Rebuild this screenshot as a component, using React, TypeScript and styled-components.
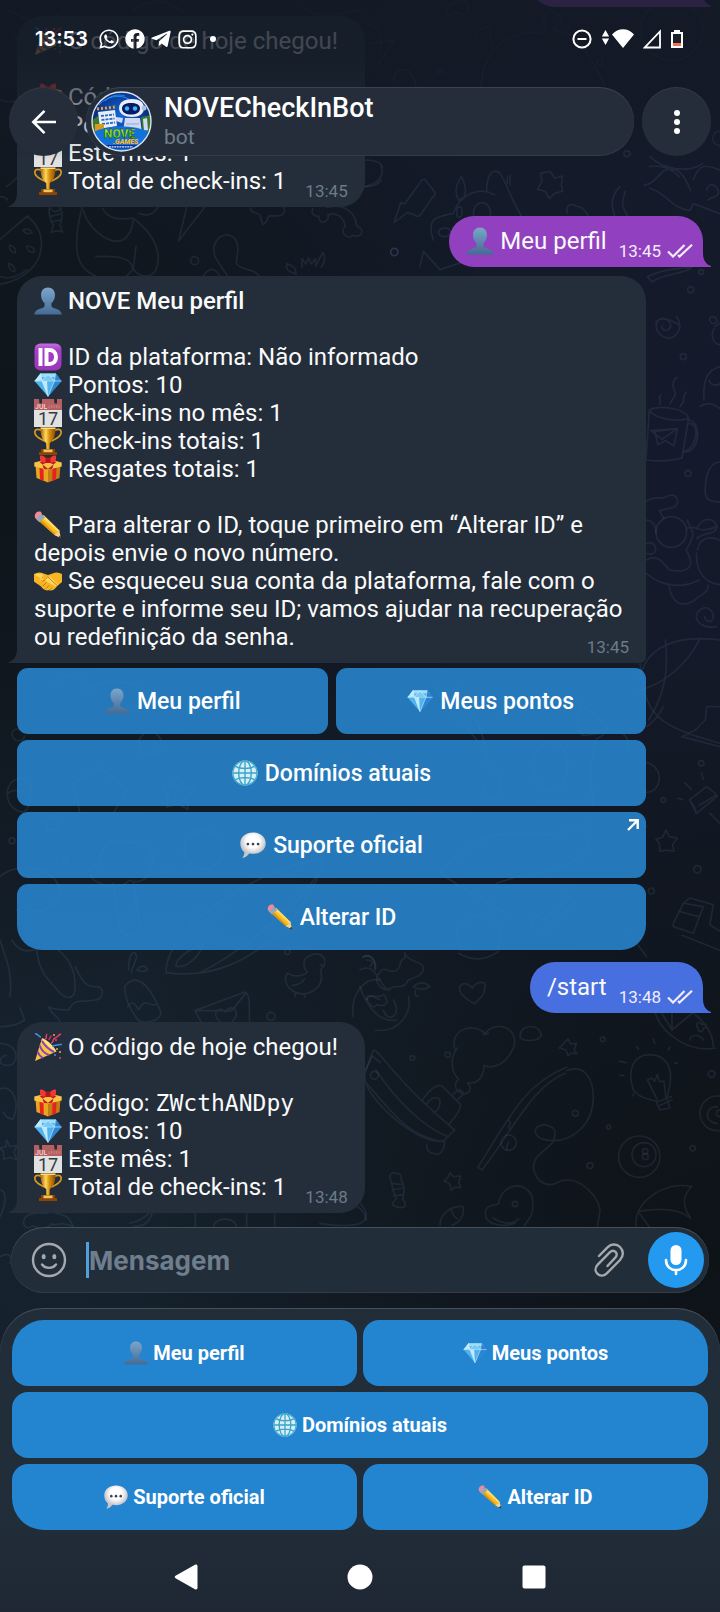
import React from 'react'
import type { FC, ReactNode } from 'react'
import styled, { createGlobalStyle } from 'styled-components'
import { FaWhatsapp, FaFacebook, FaTelegramPlane, FaInstagram } from 'react-icons/fa'

const GlobalStyle = createGlobalStyle`
  * {
    box-sizing: border-box;
  }
  body {
    margin: 0;
    background-color: #131a27;
    font-family: Roboto, 'Noto Sans', sans-serif;
    color: #ffffff;
  }
  button,
  input {
    margin: 0;
    padding: 0;
    border: 0;
    background: none;
    color: inherit;
    font-family: inherit;
  }
  svg {
    display: block;
    flex: none;
  }
`

const Screen = styled.div`
  position: relative;
  display: flex;
  flex-direction: column;
  height: 100vh;
  overflow: hidden;
  background:
    radial-gradient(circle at 100% 78%, #0e1318 0, rgba(14, 19, 24, 0) 45%),
    radial-gradient(circle at 0% 28%, #0e151a 0, rgba(14, 21, 26, 0) 40%),
    radial-gradient(circle at 100% 28%, #141a2b 0, rgba(20, 26, 43, 0) 50%),
    radial-gradient(circle at 15% 75%, #16242f 0, rgba(22, 36, 47, 0) 45%),
    #131a26;
`

const Wallpaper = styled.svg`
  position: absolute;
  inset: 0;
  width: 100%;
  height: 100%;
  fill: none;
  stroke: rgba(120, 155, 195, 0.12);
  stroke-linecap: round;
  stroke-linejoin: round;
  stroke-width: 5;
`

/* top bars */

const TopOverlay = styled.header`
  position: absolute;
  z-index: 2;
  top: 0;
  left: 0;
  right: 0;
  padding: 0 9px 4px;
  background: linear-gradient(
    rgba(19, 26, 38, 0.8),
    rgba(19, 26, 38, 0.8) 35%,
    rgba(19, 26, 38, 0.6) 60%,
    rgba(19, 26, 38, 0)
  );
`

const StatusBar = styled.div`
  display: flex;
  align-items: center;
  gap: 5px;
  height: 78px;
  padding: 0 26px;
  margin-bottom: 9px;
`

const Clock = styled.time`
  margin-right: 5px;
  font-family: Inter, Roboto, sans-serif;
  font-size: 20px;
  font-weight: 600;
  line-height: 24px;
`

const StatusIcons = styled.div`
  display: flex;
  align-items: center;
  gap: 9px;
  margin-left: auto;
`

const Dot = styled.span`
  width: 6px;
  height: 6px;
  margin-left: 7px;
  border-radius: 50%;
  background-color: #ffffff;
`

const TopRow = styled.div`
  display: flex;
  gap: 8px;
`

const RoundButton = styled.button`
  display: flex;
  align-items: center;
  justify-content: center;
  flex: none;
  width: 69px;
  height: 69px;
  border-radius: 50%;
  background-color: #262d3a;
  box-shadow: inset 0 1px 0 #323a46;
`

const TitlePill = styled.div`
  display: flex;
  align-items: center;
  flex: 1;
  gap: 12px;
  min-width: 0;
  height: 69px;
  padding-left: 5px;
  border-radius: 35px;
  background-color: #262d3a;
  box-shadow: inset 0 1px 0 #3a434e, inset 0 -1px 0 #323a46;
`

const ChatTitle = styled.h1`
  margin: 0;
  font-size: 27px;
  font-weight: 500;
  line-height: 30px;
`

const ChatSubtitle = styled.p`
  margin: 0;
  font-size: 21px;
  line-height: 28px;
  color: #6f7e8b;
`

/* messages */

const Chat = styled.main`
  position: relative;
  display: flex;
  flex: 1;
  flex-direction: column;
  justify-content: flex-end;
  gap: 9px;
  min-height: 0;
  padding: 0 17px 14px;
  overflow: hidden;
`

const Bubble = styled.article<{ $out?: string; $joined?: boolean }>`
  position: relative;
  flex: none;
  width: fit-content;
  max-width: 629px;
  align-self: ${({ $out }) => ($out ? 'flex-end' : 'flex-start')};
  padding: 11px ${({ $out }) => ($out ? 10 : 17)}px 6px 17px;
  border-radius: ${({ $out, $joined }) =>
    $out ? '25px 25px 0 25px' : $joined ? '25px 25px 6px 0' : '25px 25px 25px 0'};
  background-color: ${({ $out }) => $out || '#232e3a'};
  color: ${({ $out }) => $out || '#232e3a'};
`

const Tail = styled.svg<{ $right?: boolean }>`
  position: absolute;
  bottom: 0;
  ${({ $right }) => ($right ? 'right: -8px; transform: scaleX(-1);' : 'left: -8px;')}
`

const Line = styled.div<{ $bold?: boolean }>`
  min-height: 28px;
  font-size: 24px;
  line-height: 28px;
  font-weight: ${({ $bold }) => ($bold ? 500 : 400)};
  color: #fafafa;
`

/* the stamp hangs 6px below its line, the bubble's bottom padding allows for it */
const Stamp = styled.span<{ $out?: boolean }>`
  display: flex;
  align-items: center;
  gap: 6px;
  float: right;
  height: 20px;
  margin: 14px 0 0 ${({ $out }) => ($out ? 12 : 19)}px;
  font-size: 17px;
  line-height: 20px;
  color: ${({ $out }) => ($out ? '#f4ecfb' : '#6d7b88')};
`

const Code = styled.code`
  font-family: 'DejaVu Sans Mono', monospace;
  font-size: 23px;
  line-height: 24px;
`

const Group = styled.section`
  display: flex;
  flex-direction: column;
  flex: none;
  gap: 5px;
  width: 100%;
  max-width: 629px;
  margin-bottom: 3px;
`

const Keys = styled.div<{ $gap: number }>`
  display: grid;
  grid-template-columns: 1fr 1fr;
  gap: 6px ${({ $gap }) => $gap}px;
`

const Key = styled.button<{ $wide?: boolean }>`
  display: flex;
  align-items: center;
  justify-content: center;
  height: 66px;
  grid-column: ${({ $wide }) => ($wide ? '1 / -1' : 'auto')};
`

const InlineKey = styled(Key)`
  position: relative;
  gap: 7px;
  border-radius: 11px;
  background-color: rgba(40, 136, 209, 0.87);
  font-size: 23px;
  font-weight: 500;
  &:last-child {
    border-radius: 11px 11px 25px 25px;
  }
`

const LinkMark = styled.svg`
  position: absolute;
  top: 7px;
  right: 7px;
`

/* composer and reply keyboard */

const Composer = styled.form`
  position: relative;
  display: flex;
  align-items: center;
  flex: none;
  height: 66px;
  margin: 0 11px 15px;
  padding: 0 5px 0 20px;
  border-radius: 33px;
  background-color: #222d3a;
  box-shadow: inset 0 1px 0 #46505b, inset 0 -1px 0 #333d49;
`

const IconButton = styled.button`
  width: 36px;
  height: 36px;
  color: #a5a9ae;
`

const Caret = styled.span`
  width: 3px;
  height: 36px;
  margin-left: 19px;
  background-color: #529fdc;
`

const Field = styled.input`
  flex: 1;
  min-width: 0;
  height: 40px;
  outline: none;
  font-family: Inter, Roboto, sans-serif;
  font-size: 26px;
  font-weight: 700;
  &::placeholder {
    color: #6f7e8d;
    opacity: 1;
  }
`

const MicButton = styled.button`
  display: flex;
  align-items: center;
  justify-content: center;
  width: 56px;
  height: 56px;
  margin-left: 20px;
  border-radius: 50%;
  background-color: #2499f0;
`

const Panel = styled.footer`
  position: relative;
  flex: none;
  padding: 12px 12px 0;
  border-radius: 44px 44px 0 0;
  background: linear-gradient(#222d3a 70%, #1e2733);
  box-shadow: inset 0 1px 0 #46505b;
`

const ReplyKey = styled(Key)`
  gap: 5px;
  border-radius: 16px;
  background-color: #2384d0;
  font-size: 20px;
  font-weight: 700;
  &:nth-child(1) {
    border-top-left-radius: 32px;
  }
  &:nth-child(2) {
    border-top-right-radius: 32px;
  }
  &:nth-child(4) {
    border-bottom-left-radius: 32px;
  }
  &:nth-child(5) {
    border-bottom-right-radius: 32px;
  }
`

const NavBar = styled.nav`
  display: flex;
  align-items: center;
  justify-content: center;
  gap: 138px;
  height: 70px;
  margin-top: 12px;
`

const NavButton = styled.button`
  display: flex;
  align-items: center;
  justify-content: center;
  width: 36px;
  height: 36px;
`

/* emoji drawings, all on a 28 x 28 grid */

const EmojiSvg = styled.svg<{ $inline?: boolean }>`
  display: ${({ $inline }) => ($inline ? 'inline-block' : 'block')};
  vertical-align: top;
  margin-right: ${({ $inline }) => ($inline ? 6 : 0)}px;
`

const drawings: Record<string, ReactNode> = {
  person: (
    <>
      <defs>
        <linearGradient id="person" x1="0" y1="0" x2="0" y2="1">
          <stop offset="0" stopColor="#7ba6cb" />
          <stop offset="1" stopColor="#456b94" />
        </linearGradient>
      </defs>
      <path
        fill="url(#person)"
        d="M14 .5c4.300 0 7 3 7 7.500 0 3.600-1.500 6.500-3.600 8.200v2.600c0 1.200 1 1.700 3.100 2.400 4.200 1.300 6.500 2.400 7.300 6.300H.2c.8-3.900 3.100-5 7.300-6.300 2.100-.7 3.100-1.200 3.100-2.400v-2.600C8.500 14.500 7 11.600 7 8 7 3.500 9.700.5 14 .5z"
      />
    </>
  ),
  id: (
    <>
      <defs>
        <linearGradient id="idbg" x1="0" y1="0" x2="0" y2="1">
          <stop offset="0" stopColor="#c46fe0" />
          <stop offset="0.25" stopColor="#a63fc8" />
          <stop offset="1" stopColor="#9a35b8" />
        </linearGradient>
      </defs>
      <rect x="0.500" y="0.500" width="27" height="27" rx="6" fill="url(#idbg)" />
      <path d="M6.500 5v18M12.500 7v14h2.500c4.500 0 7-2.700 7-7s-2.500-7-7-7z" fill="none" stroke="#fff" strokeWidth="4" />
    </>
  ),
  gem: (
    <>
      <path fill="#4fb3ee" d="M6.500 2.500h15L27.500 10 14 25.500.5 10z" />
      <path fill="#9bdcfb" d="M6.500 2.500h15l3 3.500H3.700z" />
      <path fill="#7cc8f5" d="M7 9.500 14 4l7 5.500z" />
      <path fill="#bdeafd" d="M.5 10 6.500 2.500 8 9.500zM14 25.500 8 10h5z" />
      <path fill="#2b85d4" d="M14 25.500 20.500 10h7zM21.500 2.500l6 7.500-7-.5z" />
      <path d="M.5 10h27M8 10l6 15.500L20.500 10M6.500 2.500 8 10l6-7 6.500 7 1-7.500" fill="none" stroke="#d5f2fe" strokeWidth="0.600" />
    </>
  ),
  calendar: (
    <>
      <path fill="#e1e1e1" d="M0 10h28v18H0z" />
      <path fill="#b45f61" d="M0 0h28v11H0z" />
      <path fill="#252a33" d="M5 0h3v4.500H5.500zM20 0h3v4.500h-2.500z" />
      <text x="1" y="9.500" fontSize="7" fontWeight="500" fill="#f0d5d4">JUL</text>
      <path d="M15 6.500v3M17.500 6v3M20 6v3M22.500 6v3M25 6v3" stroke="#c9797b" strokeWidth="1.300" />
      <text x="14" y="26" fontSize="18" textAnchor="middle" fill="#36393e">17</text>
    </>
  ),
  trophy: (
    <>
      <defs>
        <linearGradient id="gold">
          <stop offset="0" stopColor="#a85f06" />
          <stop offset="0.350" stopColor="#ffd95a" />
          <stop offset="0.600" stopColor="#d78d0c" />
          <stop offset="1" stopColor="#8f4c04" />
        </linearGradient>
      </defs>
      <path d="M7.500 3.500C2.500 1 0 3 1.200 7c1.300 4 5.800 4.600 8.800 7M20.500 3.500c5-2.500 7.500-.5 6.300 3.500-1.300 4-5.800 4.600-8.800 7" fill="none" stroke="#d99a1d" strokeWidth="1.700" />
      <path fill="url(#gold)" d="M6.500.8h15c0 8-2 13-5.700 15.200l-.3 6.500h-3l-.3-6.500C8.500 13.800 6.500 8.800 6.500.8z" />
      <path fill="#f9dc7c" d="M6.500.5h15v1.500h-15z" />
      <path fill="#8a4408" d="M7 22h14v3h2v3H5v-3h2z" />
      <path fill="#f3c455" d="M9.500 22.500h9v2.700h-9z" />
    </>
  ),
  gift: (
    <>
      <path fill="#e9a520" d="M1.500 10 14 13.500v14L2.500 23z" />
      <path fill="#c47c14" d="M26.500 10 14 13.500v14L25.500 23z" />
      <path fill="#f5c445" d="M.3 7.500 14 4l13.700 3.500v4L14 15 .3 11.500z" />
      <path fill="#e2261e" d="m5.500 12.800 4 1.200.3 12-3.800-1.500zM22.500 12.800l-4 1.200-.3 12 3.800-1.500z" />
      <path fill="#c71b1b" d="m5.500 7 5-1.500 9 4-1.200 4.300-3.500.8zM22.500 7l-5-1.500-9 4 1.200 4.300 3.500.8z" />
      <path fill="#ee3a37" d="M13 4.500C10-.5 5-.5 6 2.500c-.5 4 1.500 6 7 4.500zM15 4.500c3-5 8-5 7-2 .5 4-1.500 6-7 4.500z" />
      <rect x="11.500" y="2.500" width="5" height="5.500" rx="1.500" fill="#b81518" />
    </>
  ),
  pencil: (
    <>
      <path fill="#fbbc1e" d="M8.500 4.500 25 20.500l1.500 6-6-2.500L3.500 8.800z" />
      <path fill="#e2930d" d="m3.500 8.800 2-1.500L22 23.500l-1.500.5z" />
      <path fill="#ffdc62" d="m8.500 4.500 1.500-.3L26 20l-1 .5-1.500 0L7.500 6z" />
      <path fill="#eed2a0" d="m20.500 24 4.800-4 1.700 7.200z" />
      <path fill="#3a3734" d="m27.200 27.500-3-1.200 2.200-2z" />
      <path fill="#95a8bb" d="m7 2.500 4.200 3.700-6 5L1.500 7.500z" />
      <path fill="#ef8a96" d="M1 6.500C-.2 3 3.300-.5 6.800.8L8 2.500 2.300 8z" />
    </>
  ),
  hands: (
    <>
      <path fill="#f7b523" d="M0 7c3-1.500 6-2 9.500-.5L14 8l4.500-1.500C22 5 25 5.500 28 7v8c-2 1.500-4 3-6 5.500-2 2.500-5 4-7 2.500-3 1.500-6-1-8-3.500-2-2-5-3-7-5z" />
      <path fill="#ffd75c" d="M1 7.800c3-1.300 5.500-1.300 8.500 0L6 12c-1 2 1 3 3 2l4-4 3-.5 8 8c-1 2-2.500 2-4 1z" />
      <path d="m9 19 3-3M12 21.500l3-3M15.500 23l2.500-2.500M14 10l9 8.500M7 13.500c2 1.500 4 0 6-3" fill="none" stroke="#bb6f0b" strokeWidth="0.900" strokeLinecap="round" />
    </>
  ),
  globe: (
    <>
      <circle cx="14" cy="14" r="13.500" fill="#d9eef8" />
      <path d="M14 .5v27M.5 14h27M3 6.500c6 3.500 16 3.500 22 0M3 21.500c6-3.500 16-3.500 22 0" fill="none" stroke="#39a5c8" strokeWidth="1.500" />
      <ellipse cx="14" cy="14" rx="6.800" ry="13.200" fill="none" stroke="#39a5c8" strokeWidth="1.500" />
      <circle cx="14" cy="14" r="13" fill="none" stroke="#49aecd" strokeWidth="1.400" />
    </>
  ),
  chat: (
    <>
      <defs>
        <radialGradient id="talk" cx="0.5" cy="0.350">
          <stop offset="0.500" stopColor="#ffffff" />
          <stop offset="1" stopColor="#c4c6ca" />
        </radialGradient>
      </defs>
      <path fill="url(#talk)" d="M14 .5c7.500 0 13.700 4.500 13.700 11.500S21.500 23.500 14 23.500c-1.300 0-2.700-.1-4-.4-1.800 2.400-4.500 4.400-7.700 4.700 1.800-1.800 2.500-4 2.200-6.300C1.800 19.400.3 16 .3 12 .3 5 6.500.5 14 .5z" />
      <g fill="#404247">
        <circle cx="8.500" cy="13" r="1.500" />
        <circle cx="14" cy="13" r="1.500" />
        <circle cx="19.500" cy="13" r="1.500" />
      </g>
    </>
  ),
  party: (
    <>
      <path fill="#f7c63a" d="m8 5 14.500 13.500L1 28z" />
      <path fill="#ffe37f" d="M8 5c4 1 12 8 14.500 13.500-5-1.500-12-8-14.500-13.500z" />
      <path d="M5.500 12c1.500 4.500 5 8.500 9.500 10M3.500 18.500c1 3 3 5 5.500 6.500M8 8c3 5 6 8 12 11" fill="none" stroke="#8b3fc4" strokeWidth="2" />
      <path d="M11 6c3-1 0-3 2-5M17 10c3 0 1-4 4-5s3-3 6-4" fill="none" stroke="#ee3a6e" strokeWidth="1.500" />
      <path d="M18 13c3 0 6-2 10-1.500M1 1c3-1 3 3 6 3" fill="none" stroke="#3f8cee" strokeWidth="1.500" />
      <path d="M15 7c0-2 2-2 2-4.500" fill="none" stroke="#d92f67" strokeWidth="1.500" />
      <g fill="#f2a93b">
        <circle cx="23" cy="16" r="1" />
        <circle cx="20" cy="2" r="1" />
        <circle cx="26" cy="19" r="1" />
      </g>
      <g fill="#ee3a6e">
        <circle cx="26" cy="25" r="1" />
        <circle cx="22" cy="7" r="1" />
      </g>
      <circle cx="21" cy="22" r="1" fill="#3f8cee" />
    </>
  ),
}

type EmojiProps = {
  name: string
  size?: number
  inline?: boolean
}

const Emoji: FC<EmojiProps> = ({ name, size = 28, inline }) => (
  <EmojiSvg $inline={inline} width={size} height={size} viewBox="0 0 28 28" aria-hidden="true">
    {drawings[name]}
  </EmojiSvg>
)

const E: FC<{ n: string }> = ({ n }) => <Emoji name={n} inline />

const BubbleTail: FC<{ right?: boolean }> = ({ right }) => (
  <Tail $right={right} width="9" height="14" viewBox="0 0 9 14" fill="currentColor" aria-hidden="true">
    <path d="M8 0h1v14H0v-1c5-1.500 8-6 8-13z" />
  </Tail>
)

type OutgoingProps = {
  color: string
  time: string
  children: ReactNode
}

const Outgoing: FC<OutgoingProps> = ({ color, time, children }) => (
  <Bubble $out={color}>
    <Line>
      {children}
      <Stamp $out>
        {time}
        <svg width="26" height="14" viewBox="0 0 26 14" fill="none" stroke="currentColor" strokeWidth="2.200" aria-hidden="true">
          <path d="m1 7.500 5 5L17.500 1M11 11l1.500 1.500L25 .8" />
        </svg>
      </Stamp>
    </Line>
    <BubbleTail right />
  </Bubble>
)

type CheckInProps = {
  code: string
  time: string
}

const CheckInMessage: FC<CheckInProps> = ({ code, time }) => (
  <Bubble>
    <Line><E n="party" />O código de hoje chegou!</Line>
    <Line />
    <Line><E n="gift" />Código: <Code>{code}</Code></Line>
    <Line><E n="gem" />Pontos: 10</Line>
    <Line><E n="calendar" />Este mês: 1</Line>
    <Line>
      <E n="trophy" />Total de check-ins: 1
      <Stamp>{time}</Stamp>
    </Line>
    <BubbleTail />
  </Bubble>
)

const Avatar = () => (
  <svg width="61" height="61" viewBox="0 0 61 61" role="img" aria-label="NOVE Games">
    <defs>
      <radialGradient id="sky" cx="0.5" cy="0.4">
        <stop offset="0" stopColor="#1467d8" />
        <stop offset="1" stopColor="#06267c" />
      </radialGradient>
      <linearGradient id="lime" x1="0" y1="0" x2="0" y2="1">
        <stop offset="0" stopColor="#d4f52a" />
        <stop offset="1" stopColor="#3fc414" />
      </linearGradient>
      <clipPath id="disc">
        <circle cx="30.500" cy="30.500" r="29" />
      </clipPath>
    </defs>
    <g clipPath="url(#disc)">
      <path fill="url(#sky)" d="M0 0h61v61H0z" />
      <path d="M8 14c8-9 20-11 30-6M14 10c6-6 14-7 20-5" fill="none" stroke="#2f9df5" strokeWidth="0.800" />
      <path fill="#3c7a2a" d="M0 30l7-5 3 14-8 3zM50 26l10-2v16l-8 2z" />
      <path fill="#e8eef8" d="m7 21 17-2 2 16-17 3z" />
      <path d="m6 18 18-2" stroke="#e0a62e" strokeWidth="3" strokeDasharray="2 2" />
      <path d="m10 25 13-1.500M10.500 29l13-1.500M11 33l13-1.500" stroke="#2b6ac2" strokeWidth="1.800" strokeDasharray="3 1" />
      <path fill="#d69b18" d="M4 33h9v8H4z" />
      <path fill="#cfdaf2" d="M34 27h15l2 14H32zM52 28l4-1 1 12-4 1zM25 26l7 1-1 5-6-2z" />
      <path fill="#e9eefc" d="M28 17c0-6 6-9 13-9s12 3 12 9-5 9-12 9-13-3-13-9z" />
      <path fill="#0a1a62" d="M31 17.500c0-4 4-5.500 9-5.500s9 1.500 9 5.500-4 6-9 6-9-2-9-6z" />
      <circle cx="36" cy="17.500" r="2.200" fill="#38b9ff" />
      <circle cx="44" cy="17.500" r="2.200" fill="#38b9ff" />
      <circle cx="53" cy="17" r="2.500" fill="#aebfe6" />
      <path d="M35 33h13" stroke="#8ea6d4" strokeWidth="1" />
      <path fill="#1172dc" d="M0 42c18-9 42-9 61 0v19H0z" />
      <text x="13" y="47" fontSize="12" fontWeight="900" fill="url(#lime)" stroke="#0a3d14" strokeWidth="0.400">NOVE</text>
      <text x="22" y="53" fontSize="7" fontWeight="900" fontStyle="italic" fill="#ffb81c">.GAMES</text>
      <path fill="#062f8f" d="M13 54h34v3.500H13z" />
      <path d="M18 55.800h24" stroke="#dfe9ff" strokeWidth="1.300" strokeDasharray="2 0.600" />
    </g>
    <circle cx="30.500" cy="30.500" r="29.500" fill="none" stroke="#dbe5f1" strokeWidth="1.400" />
  </svg>
)

const Doodles = () => (
  <Wallpaper viewBox="0 0 720 1612" preserveAspectRatio="xMidYMid slice" aria-hidden="true">
    <g transform="translate(0 180) scale(.3333)">
      <path d="M0 178 82 108c60 50 50 120 10 160-30 30-60 40-92 45M0 290c30 10 60-5 80-20M68 150q20-8 28 8-16 8-28-8zM28 195q22 5 18 24-18-2-18-24zM80 198q22 0 24 18-22 4-24-18zM26 250q20 5 18 24-18 0-18-24zM2 50q14 0 20 10" />
      <path d="M148 82q20 25 34 0 8 30-2 52l8 22q-18-8-34 2l6-24q-16-26-12-52zM150 110l30-8M152 126l30-6" />
      <path d="M246 82c-30 120-20 180 40 206M250 90c10 60 130 160 150 32M308 86c20 40 70 30 90 28 70 50 90 110 68 160-30 30-60 5-66-10l8-66M288 230c60-3 110 0 110 40l-20 20M415 100q40 15 58-18M560 82l-24 100 78-100M752 84c-6 14 30 16 28 22l8 26c10 4 16-24 22-25 40 4 50-6 40-25M938 86c-8 20 14 24 18 22 0 30 34 20 28-4 40-8 50 20 52 34-20 20 10 44 22 28 30 12 38-22 12-28-2-40-40-70-88-56" />
      <path d="M684 290c-40-60-44-60-42-90 10-40 56-50 70-10 8 50-20 60 16 74 30 8 40 12 50 24M610 288q26-40 50 0M862 250c-10 20 12 28 26 32 0-30-20-24-26-32zM906 262v-26l12 16 8-18 8 18 12-16 2 22 20-40c10 8 6 30-4 44M1094 20q36 0 50-20" />
      <circle cx="584" cy="242" r="12" /><circle cx="1183" cy="216" r="11" />
    </g>
    <g transform="scale(.3333)">
      <path d="M40 100c30 30 0 60 30 90M0 300c60 20 80-20 100-60M20 560c80-60 80-120 20-160M20 30c60 20 90 60 160 10M400 30c60-40 100-30 160 10M900 20c60 40 120 20 180 10" />
    </g>
    <g transform="translate(360) scale(.3333)">
      <path d="M262 40c-10-20 10-30 20-26 10-30 50-10 40 6 10 20-20 30-30 16-16 14-30 12-30 4zM20 70c40 10 50 40 40 90M30 130l74-8-50 70M100 240c0-40 60-50 68 20M364 260c0-90 70-180 190-160M556 100c-10-50 0-90 30-60 20 6 20 10 20 26-16 4-20 10-24 26 70 0 110 80 150 160M342 130c10-30 20-60 50-46-4 20-4 40 10 66" />
      <path d="M186 540q6-4 12 2l26 34q4 10-8 18l-34 50q-10 10-20 0l-20-6-40 30 20-60 12 4zM570 514l14 20 24-6-4 26 4 20-24 6-16 16-12-22-24-6 14-24-4-24zM304 530c-20 30-20 50-8 70l16-8c10-20 0-50-8-62zM380 572c0-50 20-70 40-52 20 30 30 70 64 128M280 640c20-60 80-80 124-56M220 720c-20-60 0-70 60-80M180 800l10-46 50 55 60-20M236 700c-4-20 30-20 36-6 0 20-30 20-36 6z" />
      <ellipse cx="366" cy="640" rx="26" ry="32" /><ellipse cx="298" cy="636" rx="8" ry="16" />
      <path d="M622 640c-8-30 20-30 26-20 20-6 30 20 36 26M780 560c-30 30-26 60-16 88M796 574c-10 30-14 40 6 72M870 470c40 40 120 50 158 20M868 500c50-10 80 20 90 30M852 556c30-6 40-26 60-44 40-16 60 10 80 60M870 565c60 20 60 60 120 66l10-20 80 30M1000 540c20-60 50-40 80-30M1040 570c10-30 30-10 34 0 10 20-20 20-30 30M450 526v28M442 530v20" />
      <circle cx="1080" cy="415" r="22" /><circle cx="801" cy="461" r="9" /><circle cx="103" cy="756" r="11" /><circle cx="240" cy="210" r="8" /><circle cx="720" cy="186" r="9" />
      <ellipse cx="935" cy="90" rx="94" ry="90" /><path d="M60 490c20 40-10 60-44 70M18 480q40 0 50 20" />
    </g>
    <g transform="translate(620 260) scale(.3333)">
      <path d="M82 50c60-30 100-20 130-30M82 50l14 16c40-30 90-20 120-44M108 190c10-30 70 0 72 10-14 60-80 30-70-10 10-30 44-10 42 10-10 20-30 10-26-2M170 170q12 16 8 30M272 172c14-8 26 14 14 18-14 4-20-10-14-18zM284 200c20-10 20-20 34-16M282 206c-10 20-4 44 16 48M252 420c-4-60 10-90 48-100M240 440c20-16 40-10 60 6M268 362c4 16 24 16 32 8" />
      <path d="M88 450 78 600q60 8 108-6l20-120c-10-30-90-40-118-24zM90 454c20 24 90 34 114 20M206 490c40 0 20 80-14 84M208 480c40 10 30 100-16 96M92 512l80-6-10 52-26-16-22 12-10-40 68-8-46 32zM118 434c10-20-8-16 4-30M150 432c20-40 20-20 10-50-4-20 4-26 12-30M180 440c20-20 4-30 18-44" />
      <path d="M300 606c-30 0-44 40-44 80-4 30 10 40 44 40M78 724c30-20 50-2 64-16 30-10 40 20 20 34l-44 10 14 24M78 780c20 2 30 12 30 40M202 804c40-10 20 20 90-4M230 806c20-40 50-30 60-10 4 30-40 20-60 40M232 870c10-50 60-40 80-20M230 880c-4 60 30 90 70 94M80 850c20-8 30 10 26 24-6 10-20 10-30 6M78 900c40-20 50 10 70 30 60 10 80-10 50-60 40-60 10-60 4-90M78 940c60 50 120 40 160 20M146 970c10 80 60 70 90 40 20-10 30-20 28-34" />
      <circle cx="154" cy="816" r="46" /><path d="M290 1100c-60 10-80-40-40-56 20-4 40 20 24 40-10 4-20-4-20-14M40 1296c90-20 160-80 200-160M136 1140c10 90 0 160-50 240M60 1260c10-80 80-140 240-120" />
      <circle cx="212" cy="89" r="9" /><circle cx="190" cy="290" r="9" /><circle cx="204" cy="640" r="9" /><circle cx="243" cy="36" r="7" />
    </g>
    <g transform="translate(340 480) scale(.3333)">
      <path d="M900 550c20 140 20 180 240 240M1140 680l-40 0-4 40-30 30-40 20 114 30M920 740q30-20 50-60M916 846c70 20 40 100 0 90M1048 960l52-40q40 30 30 30l-60 50zM1048 960q20 20 20 40M1078 976l50-30M1110 1000l40 40M1034 908l20 20M1084 878l6 20M1014 955l14 4M978 1050l10 20 24 4-14 20 4 20-22-4-20 4-2-24-10-12 20-6zM1000 1330l30-60 60 10-30 80-60-20zM1030 1270l20-16 70 20-10 60 30 20M1016 1294l60 16M1026 1366l114 45" />
      <path d="M280 600c10 60 80 120 100 140l60 80c-20 40 60 60 40 120-20 30-60 10-50-20M350 620c20 60 60 70 90 190M720 670c-10 60-10 100 20 96 50-10 70-10 30 10-20 60-20 100-10 200M720 670c30 20 60 50 90 80M760 760c60-30 120 0 100 50M300 1180c160-180 260-100 360-120l90-30c10 100-60 140-220 160l-60 20M300 1180c60 40 160 100 200 120M580 1340c-20-40 20-40 30-20l60-50c-10-30 10-30 20-14 20 0 20 30 0 30l-60 50c4 30-20 30-26 10M360 1410c-20-60-10-80 20-80 10-30 60-30 80 0 40 10 20 60 10 80zM860 1350l60 80M890 1000l30 40" />
      <ellipse cx="632" cy="858" rx="52" ry="74" /><circle cx="1084" cy="850" r="8" /><circle cx="970" cy="960" r="7" /><circle cx="934" cy="1233" r="9" /><circle cx="1072" cy="1168" r="11" />
    </g>
    <g transform="translate(0 650) scale(.3333)">
      <path d="M60 240c-20-10-30 10-20 24s30 10 34-6M220 400l80-50 80 70-40 70-100 0zM534 380l16 30 36 6-26 26 4 36-30-16-34 10 6-36-20-22 34-6zM22 430c0-60 90-60 70 0 0 30-10 60-30 56-30-10-40-30-40-56zM24 430c20-20 50 0 70-4M156 494l8 16 18 4-10 16 6 12-22-4-16 4 2-18-12-10 18-6zM0 680c40-40 160-40 180 40M50 780c60 20 130-10 130-60M300 700c-50-20-20-60 0-60-10-60 60-80 90-60 40-20 90 40 60 70 0 50-50 50-60 40-30 30-70 20-90 10zM340 700l20 140c20 30 60 10 60-10l-20-130" />
      <path d="M498 968c0-150 300-320 466-340 20 20-60 150-120 220-100 80-200 140-346 120zM528 948c0-30 60-60 80-60-10 30-50 70-80 60zM600 968c120-60 300-200 370-320M110 900c10 80 40 90 70 130 40 30 50 0 44-40-6-60-40-80-60-100M226 950c30 70 50 60 70 60 20 10 10 40-10 40-40 10-60-10-80 30-20 0-40 0-60-10 10 30 40 30 34 60M0 870c10 40 40 90 30 170M0 1130c40 0 60-10 74-20l-14-36M35 870q30 50 80 24M374 1010c30-40 70-20 110 80-10 30-60 30-70 20-30-40-40-70-40-100zM382 1070c20-20 20-10 34 10 20-40 30-10 50-16M585 1082l150-56c20 10 10 60 14 90M585 1082l110 0 44-54M585 1082l18 34M660 1116c-30-30 0-50 16-30 20-30 50 0 20 30M386 960c0-60 20-60 24-40-4 20-14 30-16 50M410 960c20-20 30-10 32 0-10 6-20 6-32 0z" />
      <path d="M862 970c-20 30 20 70 60 60 30-10 50-30 40-70 30-30 0-60-30-44-30 10-20 40-10 50-20 20-50 10-60 4zM878 1006c20 0 30-10 36-20M960 945l12 2-8 10M886 1030v10M914 1032v10M1060 1100c-10-60 30-120 80-110M1090 920c30-10 40 20 36 40M1110 950c10-10 10-20-10-20M1100 1050c10-20 20-10 40 0M150 110c60-60 120-20 110 10 50-40 160-30 190 20M270 560" />
      <circle cx="36" cy="572" r="9" /><circle cx="813" cy="1099" r="12" /><circle cx="450" cy="280" r="34" /><circle cx="198" cy="627" r="8" /><circle cx="494" cy="660" r="10" /><circle cx="862" cy="905" r="8" /><circle cx="610" cy="600" r="58" />
    </g>
    <g transform="translate(360 950) scale(.3333)">
      <path d="M296 10q60 36 120-6M0 60c50-30 60 60 90 60-40 0-50-40-30-52 10-30 40 20 60-20 0-30 20-10 14-40M134 10c10 30 60 20 56 50-10 30-50 20-50 40-20 20-40 0-54 20M146 140c10 60-40 110-100 100M0 110c20 60 60 110 110 100M20 140c20-10 30 10 50-6 20 20 10 40-20 30-10 20-30-10-30-24zM70 180c10 40 60 20 30-30M8 22c20-16 40 10 36 34M160 110c20-20 40-10 50 0-20 10-30 10-50 0zM166 122c-4 20 10 20 10 14M344 161c-60-30-50-60-30-60 10 0 20 10 24 14 6-20 30-20 36-14 4 30-10 40-30 60z" />
      <path d="M286 300c-20-50 40-90 90-50 30-40 100-20 86 40-20 50-60 70-90 56 0 20-10 60-50 52 20 20 0 40-20 30-20-10-20-30-6-40-20-20-30-60-4-94M386 250l-16 4M480 260c0-40 60-40 64-4-6 20-60 20-64 4zM40 300c20 0 60 90 244 240l-30 30c-60 30-240-120-240-190 4-30 16-50 26-80zM20 400c100 120 140 160 230 176M48 360c60 90 140 170 216 200M186 452c20-30 40-50 60-44l56 56c0 20-20 40-36 60M200 462c20-30 40-20 40-6 0 20-10 30-20 30M278 434l20-16 14 12-20 20M200 584c0 30 20 24 34 30 16-10 20-24 20-40" />
      <path d="M354 652C460 480 500 400 620 352M366 660c100-130 150-250 250-290M354 652l12 8M620 362c50-20 80 20 80 80 0 80-60 130-120 130-60 0-70-40-30-48 40 6 40 20 30 50-20 30-60 40-60 80 10 50 50 60 80 40 60-20 120 50 120 90l-8 46M450 540c-10-20 10-10-4-30M440 600c0-20 4-16 6-24M92 690c-10-20 10-24 16-20 20 0 16 16 14 18 16 20 10 40 6 60 20 20 0 30-20 22-20-4-4-20 2-26-16-20-10-40-18-54zM94 700l34 4M96 720l34-6M100 738l28-4M624 266l8 16 18-2-8 18 8 12-18 0-8 8-6-18-20-6 14-14zM270 668l10 12 22-2-6 20 6 14-18 0-10 8-6-20-16-6 12-12zM376 790c0-30 30-20 40-30 10-60 80-70 100-20 10 50-10 70-24 88M376 790c0 40 60 40 90 30M400 804c30 20 60 20 76 2M240 826c0-40 40-60 70-56 4 40-20 50-34 56M274 780c4 10 6 20 18 26M0 760c20 20 20 30 18 50" />
      <path d="M820 420c-20-60 0-106 50-106 70 4 70 70 50 130l10 30-30 6-12-26c-30-10-50-10-68-34zM892 450l-30-60 14-6 8 10 8-20 6 20h14l6 50M892 456l42-16M900 466l36-16M780 334l18 4M780 376h12M830 290l6 8M880 268l4 12M930 292l-6 8M952 338l-8 2M820 438v-6M995 710c-80-20-180 50-166 120M835 784c60-10 120-10 156 20M996 708c-30 30-30 60-4 96M838 790l30 40M886 190c20 60 100 120 180 104M906 190l30 50 60-50M936 190v50M1000 190c30 20 60 60 60 100M990 270c0-16 30-20 40 0M1014 234c-10-16 6-24 12-10 16-8 20 10 4 10-2 16-16 12-16 0z" />
      <circle cx="838" cy="620" r="62" /><circle cx="852" cy="614" r="36" /><circle cx="856" cy="604" r="8" /><circle cx="856" cy="620" r="9" /><circle cx="1072" cy="490" r="52" /><path d="M1072 520c-40 0-40-50 0-50M1080 500c-14 0-14-20 0-20" />
      <circle cx="446" cy="578" r="23" /><circle cx="43" cy="376" r="12" /><circle cx="157" cy="324" r="7" /><circle cx="263" cy="314" r="8" /><circle cx="728" cy="268" r="7" /><circle cx="646" cy="490" r="9" /><circle cx="746" cy="531" r="6" /><circle cx="690" cy="647" r="9" /><circle cx="998" cy="595" r="8" /><circle cx="1055" cy="372" r="10" /><circle cx="465" cy="762" r="8" />
    </g>
    <g transform="translate(0 1010) scale(.3333)">
      <path d="M0 100c60 0 60 70 20 66-30 0-20-30 0-30M0 236c40-10 60 40 40 90-20 4-30-20-30-20M20 390l10 20 22-4-10 20 8 24-20-8-18 6-2-24-10-10 18-4zM0 540c20 0 20 40 0 80M70 640c0-40 60-30 70-30 20-10 20 0 30 0 40 10 40 20 50 40-40-20-50 0-64-8-20 20-40 10-60 6-10 10-20 6-26-8zM390 640q40-10 60-34M400 650c40 0 50-20 56-40M586 610v40M740 610v40M824 610v40M640 650c10-30 60-30 70 0M960 640c60 10 120 10 134-10 10-20-20-40-30-44M1097 180l20-42 24 20M0 740q40-20 30 20" />
    </g>
  </Wallpaper>
)

const App: FC = () => (
  <>
    <GlobalStyle />
    <Screen>
      <Doodles />
      <TopOverlay>
        <StatusBar>
          <Clock>13:53</Clock>
          <FaWhatsapp size={22} />
          <FaFacebook size={20} />
          <FaTelegramPlane size={22} />
          <FaInstagram size={21} />
          <Dot />
          <StatusIcons>
            <svg width="20" height="20" viewBox="0 0 20 20" fill="none" stroke="#fff" strokeWidth="2">
              <circle cx="10" cy="10" r="8.600" />
              <path d="M5.500 10h9" />
            </svg>
            <svg width="33" height="20" viewBox="0 0 33 20" fill="#fff">
              <path d="m4.500 1 3.600 6.500H.9zM4.500 16 .9 9.500h7.200zM22 19 11 5.500c6-7 16-7 22 0z" />
            </svg>
            <svg width="19" height="20" viewBox="0 0 19 20" fill="none" stroke="#fff" strokeWidth="1.800">
              <path d="M17 2.500v16H1.800z" />
            </svg>
            <svg width="14" height="20" viewBox="0 0 14 20">
              <path fill="#fff" d="M3 1h6v2h3v16H0V3h3z" />
              <path fill="#1a212d" d="M2 5h8v9H2z" />
              <path fill="#ee7350" d="M2 14h8v3H2z" />
            </svg>
          </StatusIcons>
        </StatusBar>
        <TopRow>
          <RoundButton aria-label="Voltar">
            <svg width="26" height="26" viewBox="0 0 26 26" fill="none" stroke="#fff" strokeWidth="2.600">
              <path d="M25 13H2.500M13.500 1.800 2.300 13l11.200 11.200" />
            </svg>
          </RoundButton>
          <TitlePill>
            <Avatar />
            <div>
              <ChatTitle>NOVECheckInBot</ChatTitle>
              <ChatSubtitle>bot</ChatSubtitle>
            </div>
          </TitlePill>
          <RoundButton aria-label="Mais opções">
            <svg width="6" height="26" viewBox="0 0 6 26" fill="#fff">
              <circle cx="3" cy="4" r="3" />
              <circle cx="3" cy="13" r="3" />
              <circle cx="3" cy="22" r="3" />
            </svg>
          </RoundButton>
        </TopRow>
      </TopOverlay>

      <Chat>
        <Outgoing color="#8f40b8" time="13:45">/start</Outgoing>
        <CheckInMessage code="ZWcthANDpy" time="13:45" />
        <Outgoing color="#9141bf" time="13:45"><E n="person" />Meu perfil</Outgoing>
        <Group>
          <Bubble $joined>
            <Line $bold><E n="person" />NOVE Meu perfil</Line>
            <Line />
            <Line><E n="id" />ID da plataforma: Não informado</Line>
            <Line><E n="gem" />Pontos: 10</Line>
            <Line><E n="calendar" />Check-ins no mês: 1</Line>
            <Line><E n="trophy" />Check-ins totais: 1</Line>
            <Line><E n="gift" />Resgates totais: 1</Line>
            <Line />
            <Line><E n="pencil" />Para alterar o ID, toque primeiro em “Alterar ID” e depois envie o novo número.</Line>
            <Line>
              <E n="hands" />Se esqueceu sua conta da plataforma, fale com o suporte e informe seu ID; vamos ajudar na
              recuperação ou redefinição da senha.
              <Stamp>13:45</Stamp>
            </Line>
            <BubbleTail />
          </Bubble>
          <Keys $gap={8}>
            <InlineKey><Emoji name="person" size={26} />Meu perfil</InlineKey>
            <InlineKey><Emoji name="gem" size={26} />Meus pontos</InlineKey>
            <InlineKey $wide><Emoji name="globe" size={26} />Domínios atuais</InlineKey>
            <InlineKey $wide>
              <Emoji name="chat" size={26} />Suporte oficial
              <LinkMark width="12" height="12" viewBox="0 0 12 12" fill="none" stroke="#fff" strokeWidth="2.400">
                <path d="M1 11 10.500 1.500M2 1.300h8.700V10" />
              </LinkMark>
            </InlineKey>
            <InlineKey $wide><Emoji name="pencil" size={26} />Alterar ID</InlineKey>
          </Keys>
        </Group>
        <Outgoing color="#476fe0" time="13:48">/start</Outgoing>
        <CheckInMessage code="ZWcthANDpy" time="13:48" />
      </Chat>

      <Composer onSubmit={(e) => e.preventDefault()}>
        <IconButton type="button" aria-label="Emoji">
          <svg width="36" height="36" viewBox="0 0 36 36" fill="none" stroke="currentColor" strokeWidth="2.400" strokeLinecap="round">
            <circle cx="18" cy="18" r="16" />
            <path d="M11 22.500c3.500 4.500 10.500 4.500 14 0" />
            <ellipse cx="12.700" cy="14.700" rx="2" ry="2.600" fill="currentColor" stroke="none" />
            <ellipse cx="23.300" cy="14.700" rx="2" ry="2.600" fill="currentColor" stroke="none" />
          </svg>
        </IconButton>
        <Caret />
        <Field type="text" placeholder="Mensagem" aria-label="Mensagem" />
        <IconButton type="button" aria-label="Anexar">
          <svg width="36" height="36" viewBox="0 0 36 36" fill="none" stroke="currentColor" strokeWidth="2.400" strokeLinecap="round">
            <path d="M4.500 13.500 13 4.800c4-4 9.500-3.300 12.500-.3 3.500 3.500 4 9 0 13L12 31.200c-3 3-7 2.200-9.200 0-2.300-2.400-2.500-6 .4-9L15.500 9.700c1.800-1.800 4-1.800 5.500-.4s1.700 3.800 0 5.600L13 23.500" transform="translate(2.500 .5)" />
          </svg>
        </IconButton>
        <MicButton type="button" aria-label="Gravar áudio">
          <svg width="24" height="32" viewBox="0 0 24 32" fill="none" stroke="#fff" strokeWidth="2.600" strokeLinecap="round">
            <rect x="6.500" y="1" width="11" height="20" rx="5.500" fill="#fff" stroke="none" />
            <path d="M2 16c0 13.500 20 13.500 20 0M12 26.500v3.500" />
          </svg>
        </MicButton>
      </Composer>

      <Panel>
        <Keys $gap={6}>
          <ReplyKey><Emoji name="person" size={24} />Meu perfil</ReplyKey>
          <ReplyKey><Emoji name="gem" size={24} />Meus pontos</ReplyKey>
          <ReplyKey $wide><Emoji name="globe" size={24} />Domínios atuais</ReplyKey>
          <ReplyKey><Emoji name="chat" size={24} />Suporte oficial</ReplyKey>
          <ReplyKey><Emoji name="pencil" size={24} />Alterar ID</ReplyKey>
        </Keys>
        <NavBar>
          <NavButton aria-label="Voltar">
            <svg width="26" height="26" viewBox="0 0 26 26" fill="#fff">
              <path d="M22 .8c1.200-.7 2.500 0 2.500 1.400v21.600c0 1.400-1.300 2.100-2.500 1.400L2.500 14.200c-1-.6-1-1.800 0-2.400z" />
            </svg>
          </NavButton>
          <NavButton aria-label="Início">
            <svg width="26" height="26" viewBox="0 0 26 26" fill="#fff">
              <circle cx="13" cy="13" r="12.500" />
            </svg>
          </NavButton>
          <NavButton aria-label="Recentes">
            <svg width="24" height="24" viewBox="0 0 24 24" fill="#fff">
              <rect x="0.500" y="0.500" width="23" height="23" rx="2" />
            </svg>
          </NavButton>
        </NavBar>
      </Panel>
    </Screen>
  </>
)

export default App
